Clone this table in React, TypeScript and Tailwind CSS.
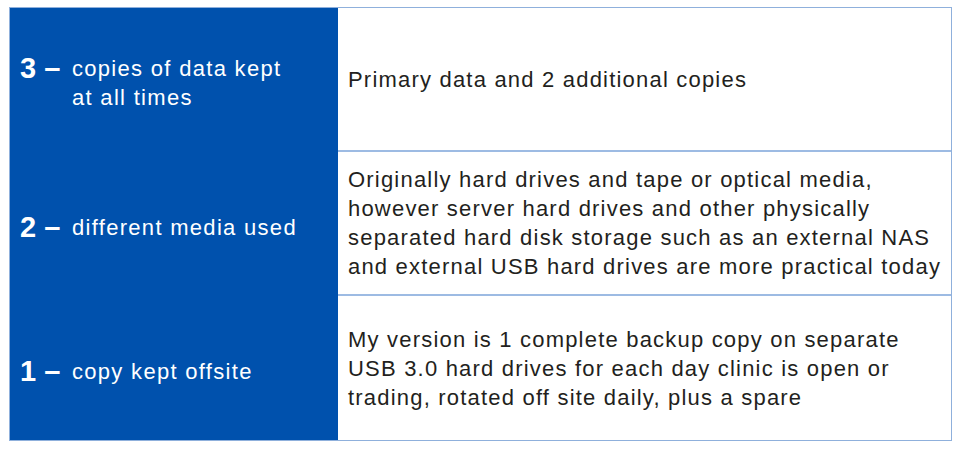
const ROWS = [
  { n: "3", label: ["copies of data kept", "at all times"], text: ["Primary data and 2 additional copies"] },
  { n: "2", label: ["different media used"], text: [
    "Originally hard drives and tape or optical media,",
    "however server hard drives and other physically",
    "separated hard disk storage such as an external NAS",
    "and external USB hard drives are more practical today",
  ] },
  { n: "1", label: ["copy kept offsite"], text: [
    "My version is 1 complete backup copy on separate",
    "USB 3.0 hard drives for each day clinic is open or",
    "trading, rotated off site daily, plus a spare",
  ] },
];

export default function App() {
  return (
    <div className="w-[963px] h-[450px] bg-white pt-[7px] pl-[9px]" style={{ fontFamily: '"Liberation Sans", Arial, sans-serif' }}>
      <div className="w-[943px] border border-[#8fb0dc] flex flex-col">
        {ROWS.map((r, i) => (
          <div key={r.n} className="flex h-[144px]">
            <div className="w-[328px] bg-[#0051ad] text-white flex items-center pl-[10px]">
              <div className="flex items-start mt-[6px]">
                <span className="text-[29px] font-bold leading-[29px] w-[52px] whitespace-nowrap">{r.n} –</span>
                <div className="text-[22px] leading-[29px] tracking-[1.3px]">
                  {r.label.map(l => <div key={l}>{l}</div>)}
                </div>
              </div>
            </div>
            <div className={"flex-1 flex items-center pl-[10px] text-[22px] leading-[29px] tracking-[1.2px] text-[#231f20] " + (i < ROWS.length - 1 ? "border-b-2 border-[#9dbbe3]" : "")}>
              <div>
                {r.text.map(t => <div key={t}>{t}</div>)}
              </div>
            </div>
          </div>
        ))}
      </div>
    </div>
  );
}
